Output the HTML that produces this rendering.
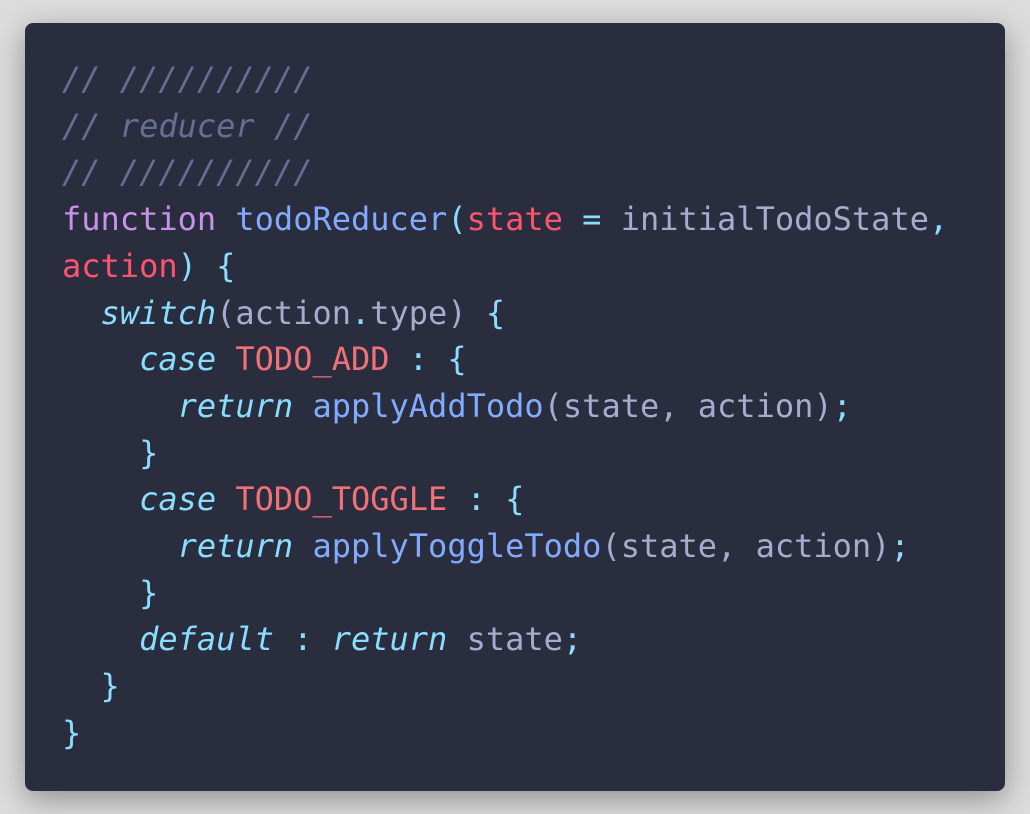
<!DOCTYPE html>
<html><head><style>
html,body{margin:0;padding:0;width:1030px;height:814px;background:#dcdcdc;overflow:hidden}
.box{position:absolute;left:25px;top:23px;width:980px;height:768px;background:#292d3e;border-radius:8px;box-shadow:0 8px 30px rgba(0,0,0,0.35)}
pre{margin:0;position:absolute;left:37px;top:33px;font-family:"DejaVu Sans Mono","Liberation Mono",monospace;font-size:32px;line-height:46.7px;color:#a6accd}
.c{color:#676e95;font-style:italic}.k{color:#c792ea}.f{color:#82aaff}.p{color:#89ddff}.r{color:#ff5370}.t{color:#f07178}.i{color:#89ddff;font-style:italic}
</style></head><body><div class="box"><pre><span class="c">// //////////</span>
<span class="c">// reducer //</span>
<span class="c">// //////////</span>
<span class="k">function</span> <span class="f">todoReducer</span><span class="p">(</span><span class="r">state</span> <span class="p">=</span> initialTodoState<span class="p">,</span>
<span class="r">action</span><span class="p">)</span> <span class="p">{</span>
  <span class="i">switch</span>(action<span class="p">.</span>type) <span class="p">{</span>
    <span class="i">case</span> <span class="t">TODO_ADD</span> <span class="p">:</span> <span class="p">{</span>
      <span class="i">return</span> <span class="f">applyAddTodo</span>(state, action)<span class="p">;</span>
    <span class="p">}</span>
    <span class="i">case</span> <span class="t">TODO_TOGGLE</span> <span class="p">:</span> <span class="p">{</span>
      <span class="i">return</span> <span class="f">applyToggleTodo</span>(state, action)<span class="p">;</span>
    <span class="p">}</span>
    <span class="i">default</span> <span class="p">:</span> <span class="i">return</span> state<span class="p">;</span>
  <span class="p">}</span>
<span class="p">}</span></pre></div></body></html>
